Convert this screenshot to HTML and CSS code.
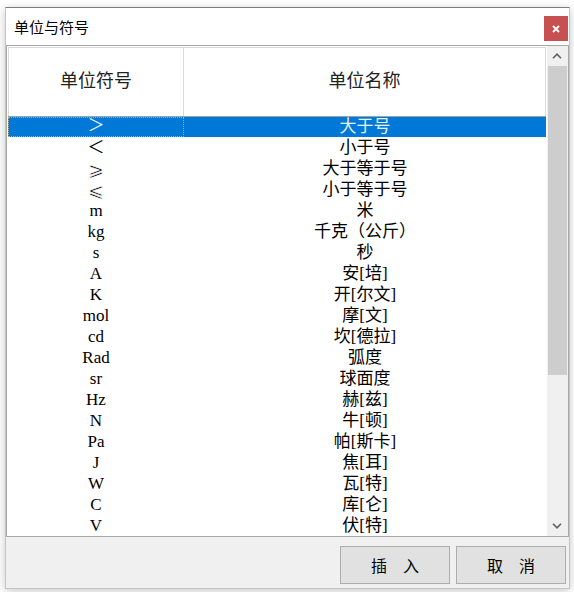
FILE: index.html
```html
<!DOCTYPE html>
<html lang="zh">
<head>
<meta charset="utf-8">
<title>单位与符号</title>
<link rel="stylesheet" href="styles.css">
</head>
<body>
<div class="window">
  <div class="titlebar">
    <span class="title">单位与符号</span>
    <button class="close" aria-label="关闭">
      <svg width="10" height="10" viewBox="0 0 10 10"><path d="M2 2 L8 8 M8 2 L2 8" stroke="#fff" stroke-width="1.8"/></svg>
    </button>
  </div>
  <div class="panel">
    <div class="list">
      <div class="head">
        <div class="hcell c1">单位符号</div>
        <div class="hcell c2">单位名称</div>
      </div>
      <div class="rows">
        <div class="row sel"><div class="cell c1 focus">＞</div><div class="cell c2">大于号</div></div>
        <div class="row"><div class="cell c1">＜</div><div class="cell c2">小于号</div></div>
        <div class="row"><div class="cell c1 math">⩾</div><div class="cell c2">大于等于号</div></div>
        <div class="row"><div class="cell c1 math">⩽</div><div class="cell c2">小于等于号</div></div>
        <div class="row"><div class="cell c1">m</div><div class="cell c2">米</div></div>
        <div class="row"><div class="cell c1">kg</div><div class="cell c2">千克（公斤）</div></div>
        <div class="row"><div class="cell c1">s</div><div class="cell c2">秒</div></div>
        <div class="row"><div class="cell c1">A</div><div class="cell c2">安[培]</div></div>
        <div class="row"><div class="cell c1">K</div><div class="cell c2">开[尔文]</div></div>
        <div class="row"><div class="cell c1">mol</div><div class="cell c2">摩[文]</div></div>
        <div class="row"><div class="cell c1">cd</div><div class="cell c2">坎[德拉]</div></div>
        <div class="row"><div class="cell c1">Rad</div><div class="cell c2">弧度</div></div>
        <div class="row"><div class="cell c1">sr</div><div class="cell c2">球面度</div></div>
        <div class="row"><div class="cell c1">Hz</div><div class="cell c2">赫[兹]</div></div>
        <div class="row"><div class="cell c1">N</div><div class="cell c2">牛[顿]</div></div>
        <div class="row"><div class="cell c1">Pa</div><div class="cell c2">帕[斯卡]</div></div>
        <div class="row"><div class="cell c1">J</div><div class="cell c2">焦[耳]</div></div>
        <div class="row"><div class="cell c1">W</div><div class="cell c2">瓦[特]</div></div>
        <div class="row"><div class="cell c1">C</div><div class="cell c2">库[仑]</div></div>
        <div class="row"><div class="cell c1">V</div><div class="cell c2">伏[特]</div></div>
      </div>
    </div>
    <div class="scrollbar">
      <div class="sbtn">
        <svg width="10" height="6" viewBox="0 0 10 6"><path d="M1 5.2 L5 1.2 L9 5.2" fill="none" stroke="#606060" stroke-width="1.6"/></svg>
      </div>
      <div class="track"><div class="thumb"></div></div>
      <div class="sbtn">
        <svg width="10" height="6" viewBox="0 0 10 6"><path d="M1 0.8 L5 4.8 L9 0.8" fill="none" stroke="#606060" stroke-width="1.6"/></svg>
      </div>
    </div>
  </div>
  <div class="footer">
    <button class="btn">插　入</button>
    <button class="btn">取　消</button>
  </div>
</div>
</body>
</html>
```
FILE: styles.css
```css
html, body {
  margin: 0;
  padding: 0;
  background: #ffffff;
}
.window {
  position: absolute;
  left: 5px;
  top: 7px;
  width: 563px;
  height: 580px;
  border: 1px solid #c4c4c4;
  border-top-color: #7c7c7c;
  background: #f0f0f0;
  box-shadow: 0 2px 9px rgba(0, 0, 0, 0.22);
  display: flex;
  flex-direction: column;
  font-family: "Noto Sans CJK SC", "Liberation Sans", sans-serif;
}
.titlebar {
  height: 37px;
  background: #ffffff;
  display: flex;
  align-items: flex-start;
  justify-content: space-between;
  flex: none;
}
.title {
  font-size: 15px;
  line-height: 20px;
  color: #000;
  margin: 9px 0 0 8px;
}
.close {
  width: 24px;
  height: 25px;
  margin: 8px 1px 0 0;
  padding: 0;
  border: 0;
  background: #c75050;
  display: flex;
  align-items: center;
  justify-content: center;
}
.panel {
  height: 490px;
  border: 1px solid #a8a8a8;
  background: #f0f0f0;
  display: flex;
  flex: none;
}
.list {
  width: 538px;
  padding: 0 1px;
  background: #ffffff;
  overflow: hidden;
  flex: none;
}
.head {
  display: flex;
  height: 69px;
  border-bottom: 1px solid #a0a0a0;
  margin-top: 1px;
}
.hcell {
  display: flex;
  align-items: center;
  justify-content: center;
  border: 1px solid #dadada;
  border-bottom: 0;
  font-size: 18px;
  line-height: 20px;
  padding-bottom: 6px;
  color: #222;
}
.hcell.c2 {
  border-left: 0;
}
.c1 {
  width: 176px;
  box-sizing: border-box;
}
.c2 {
  flex: 1;
}
.rows {
  display: flex;
  flex-direction: column;
}
.row {
  display: flex;
  height: 21px;
}
.cell {
  height: 20px;
  display: flex;
  align-items: center;
  justify-content: center;
  font-family: "Liberation Serif", "Noto Sans CJK SC", serif;
  font-size: 17px;
  line-height: 20px;
  color: #000;
  white-space: nowrap;
}
.cell.c2 {
  box-sizing: border-box;
  padding-bottom: 1px;
}
.math {
  font-family: "DejaVu Sans", sans-serif;
  font-size: 19px;
  line-height: 18px;
  -webkit-text-stroke: 0.55px #ffffff;
  color: #000;
}
.row.sel .cell {
  background: #0078d7;
  color: #e8f0fa;
}
.cell.focus {
  outline: 1px dotted #f0a030;
  outline-offset: -1px;
  padding-bottom: 2px;
  box-sizing: border-box;
}
.scrollbar {
  width: 20px;
  margin-right: 1px;
  display: flex;
  flex-direction: column;
  background: #f0f0f0;
  flex: none;
}
.sbtn {
  height: 20px;
  display: flex;
  align-items: center;
  justify-content: center;
  flex: none;
}
.track {
  flex: 1;
  padding-left: 1px;
}
.thumb {
  height: 309px;
  background: #cdcdcd;
}
.footer {
  flex: 1;
  display: flex;
  justify-content: flex-end;
  align-items: flex-start;
  gap: 6px;
  padding: 9px 3px 0 0;
}
.btn {
  width: 110px;
  height: 38px;
  background: #e1e1e1;
  border: 1px solid #adadad;
  font-family: "Noto Sans CJK SC", sans-serif;
  font-size: 16px;
  color: #000;
  padding: 0;
}
```
